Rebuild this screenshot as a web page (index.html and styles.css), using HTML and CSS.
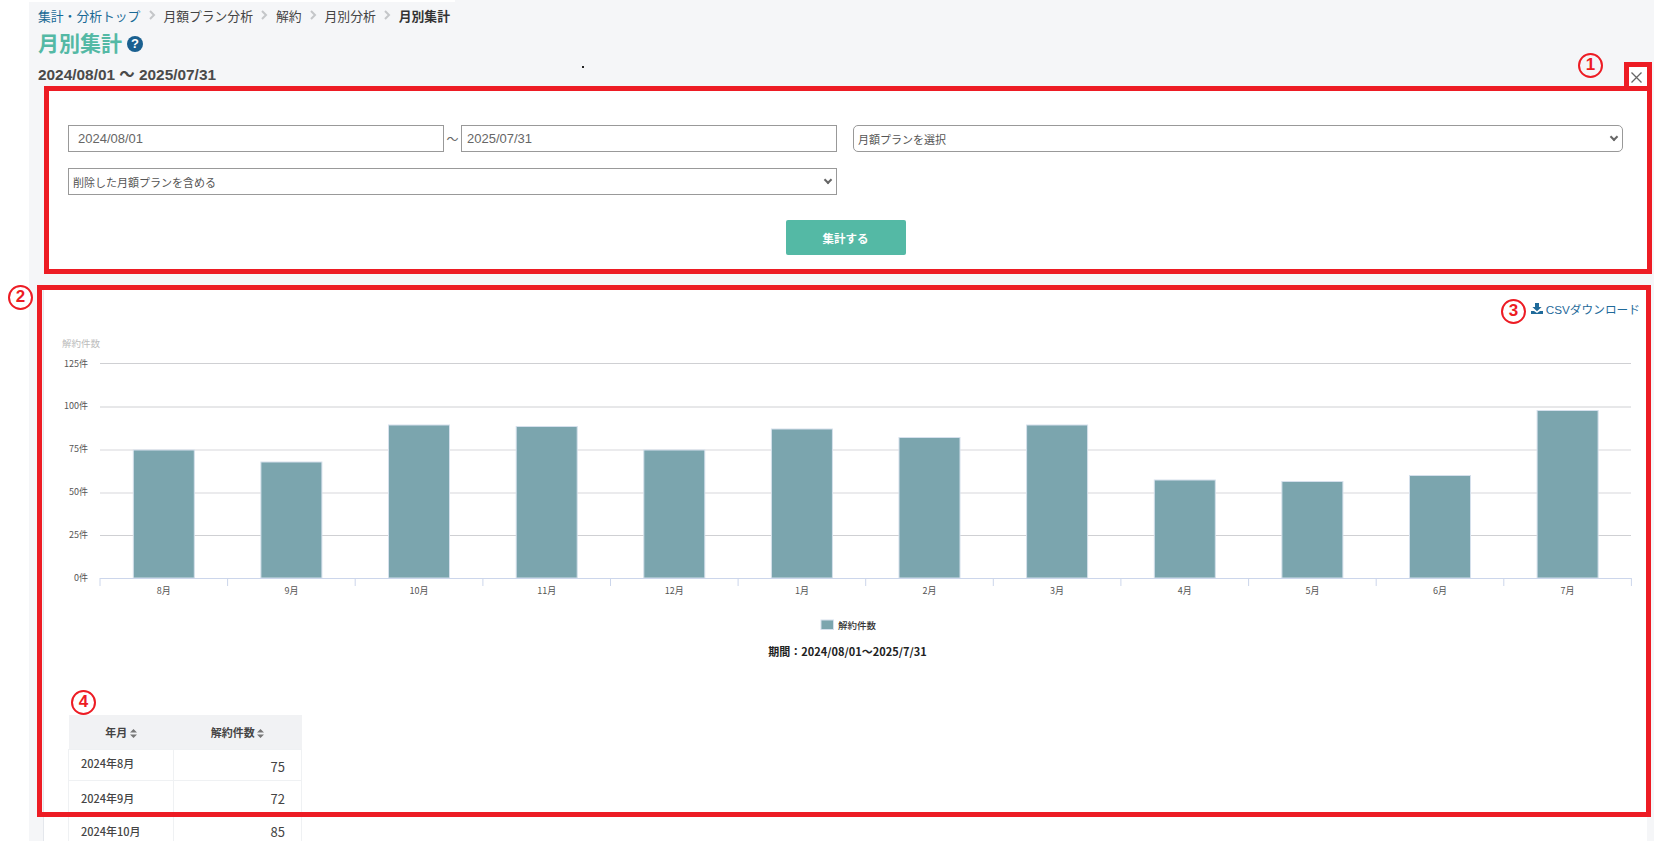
FILE: index.html
```html
<!DOCTYPE html>
<html lang="ja">
<head>
<meta charset="UTF-8">
<meta name="viewport" content="width=device-width, initial-scale=1.0">
<title>月別集計</title>
<link rel="stylesheet" href="styles.css">
</head>
<body>

<div class="pane">
    <!-- Breadcrumb -->
    <nav class="crumbs">
        <a href="#">集計・分析トップ</a>
        <svg class="crumb-sep" width="8" height="10" viewBox="0 0 8 10"><path d="M2 1l4 4-4 4" fill="none" stroke="#c4c6c9" stroke-width="2"/></svg>
        <span>月額プラン分析</span>
        <svg class="crumb-sep" width="8" height="10" viewBox="0 0 8 10"><path d="M2 1l4 4-4 4" fill="none" stroke="#c4c6c9" stroke-width="2"/></svg>
        <span>解約</span>
        <svg class="crumb-sep" width="8" height="10" viewBox="0 0 8 10"><path d="M2 1l4 4-4 4" fill="none" stroke="#c4c6c9" stroke-width="2"/></svg>
        <span>月別分析</span>
        <svg class="crumb-sep" width="8" height="10" viewBox="0 0 8 10"><path d="M2 1l4 4-4 4" fill="none" stroke="#c4c6c9" stroke-width="2"/></svg>
        <strong>月別集計</strong>
    </nav>

    <div class="title-row">
        <h1>月別集計</h1>
        <span class="help">?</span>
    </div>
    <div class="period">2024/08/01 ～ 2025/07/31</div>

    <!-- Search form -->
    <form class="search-panel">
        <div class="search-grid">
            <div class="date-range">
                <input type="text" value="2024/08/01">
                <span class="tilde">～</span>
                <input type="text" value="2025/07/31" class="date-to">
            </div>
            <div class="select-wrap"><select class="plan-select"><option>月額プランを選択</option></select></div>
            <div class="select-wrap"><select><option>削除した月額プランを含める</option></select></div>
        </div>
        <div class="submit-row">
            <button type="button">集計する</button>
        </div>
    </form>

    <!-- Result -->
    <section class="result-panel">
        <div class="csv-row">
            <a href="#" class="csv-link">
                <svg width="12" height="11" viewBox="0 0 12 11"><path d="M4 0h4v4h2.6L6 8.2 1.4 4H4zM0 8h3l3 2 3-2h3v3H0z" fill="#1f6a9a"/></svg>
                CSVダウンロード
            </a>
        </div>

        <svg class="chart" width="1603" height="340" viewBox="44 330 1603 340">
            <text class="axis-title" x="62" y="347">解約件数</text>

            <g class="grid">
                <line x1="100" x2="1631" y1="363.5" y2="363.5"/>
                <line x1="100" x2="1631" y1="407" y2="407"/>
                <line class="soft" x1="100" x2="1631" y1="450" y2="450"/>
                <line class="soft" x1="100" x2="1631" y1="493" y2="493"/>
                <line x1="100" x2="1631" y1="535.5" y2="535.5"/>
            </g>

            <g class="y-labels">
                <text x="88" y="367">125件</text>
                <text x="88" y="409">100件</text>
                <text x="88" y="452">75件</text>
                <text x="88" y="495">50件</text>
                <text x="88" y="538">25件</text>
                <text x="88" y="581">0件</text>
            </g>

            <g class="bars">
                <rect x="133.3" y="450" width="61" height="128"/>
                <rect x="260.9" y="462" width="61" height="116"/>
                <rect x="388.5" y="425" width="61" height="153"/>
                <rect x="516.2" y="426.5" width="61" height="151.5"/>
                <rect x="643.8" y="450" width="61" height="128"/>
                <rect x="771.4" y="429" width="61" height="149"/>
                <rect x="899" y="437.5" width="61" height="140.5"/>
                <rect x="1026.6" y="425" width="61" height="153"/>
                <rect x="1154.3" y="480" width="61" height="98"/>
                <rect x="1281.9" y="481.5" width="61" height="96.5"/>
                <rect x="1409.5" y="475.5" width="61" height="102.5"/>
                <rect x="1537.1" y="410.5" width="61" height="167.5"/>
            </g>

            <g class="axis">
                <path d="M100 578.5H1631"/>
                <path d="M100 578v8M227.6 578v8M355.2 578v8M482.9 578v8M610.5 578v8M738.1 578v8M865.7 578v8M993.3 578v8M1120.9 578v8M1248.6 578v8M1376.2 578v8M1503.8 578v8M1631.4 578v8"/>
            </g>

            <g class="x-labels">
                <text x="163.8" y="594">8月</text>
                <text x="291.4" y="594">9月</text>
                <text x="419" y="594">10月</text>
                <text x="546.7" y="594">11月</text>
                <text x="674.3" y="594">12月</text>
                <text x="801.9" y="594">1月</text>
                <text x="929.5" y="594">2月</text>
                <text x="1057.1" y="594">3月</text>
                <text x="1184.8" y="594">4月</text>
                <text x="1312.4" y="594">5月</text>
                <text x="1440" y="594">6月</text>
                <text x="1567.6" y="594">7月</text>
            </g>

            <rect class="legend-box" x="821" y="620" width="12.5" height="9.5"/>
            <text class="legend-text" x="838" y="628.5">解約件数</text>
            <text class="chart-caption" x="847.5" y="655.5">期間：2024/08/01～2025/7/31</text>
        </svg>

        <table class="summary">
            <thead>
                <tr>
                    <th class="col-month">年月 <svg class="sort" width="7" height="9" viewBox="0 0 7 9"><path d="M3.5 0L7 3.6H0zM0 5.4h7L3.5 9z"/></svg></th>
                    <th class="col-count">解約件数 <svg class="sort" width="7" height="9" viewBox="0 0 7 9"><path d="M3.5 0L7 3.6H0zM0 5.4h7L3.5 9z"/></svg></th>
                </tr>
            </thead>
            <tbody>
                <tr><td class="month">2024年8月</td><td class="count">75</td></tr>
                <tr><td class="month">2024年9月</td><td class="count">72</td></tr>
                <tr><td class="month">2024年10月</td><td class="count">85</td></tr>
            </tbody>
        </table>
    </section>
</div>

<!-- Close tab on the search panel -->
<div class="close-tab">
    <svg width="11" height="11" viewBox="0 0 11 11"><path d="M.5.5l10 10M10.5.5l-10 10" stroke="#666" stroke-width="1.3"/></svg>
</div>

<span class="speck"></span>

<!-- Red annotations drawn over the screenshot -->
<div class="mark mark-close"></div>
<div class="mark mark-search"></div>
<div class="mark mark-result"></div>
<span class="num num-1">1</span>
<span class="num num-2">2</span>
<span class="num num-3">3</span>
<span class="num num-4">4</span>

</body>
</html>
```

FILE: styles.css
```css
html, body {
    height: 100%;
}

body {
    margin: 0;
    height: 841px;
    overflow: hidden;
    position: relative;
    background-color: #ffffff;
    color: #444;
    font-family: "Liberation Sans", "Noto Sans CJK JP", sans-serif;
}

.pane {
    margin-left: 29px;
    height: 841px;
    overflow: hidden;
    background-color: #f5f6f8;
}

/* Breadcrumb */
.crumbs {
    display: flex;
    align-items: center;
    width: 426px;
    box-sizing: border-box;
    height: 28px;
    padding-left: 9px;
    border-top: 2px solid #ffffff;
    font-size: 12.8px;
    color: #444;
}

.crumbs a {
    color: #1a6a96;
    text-decoration: none;
}

.crumbs strong {
    color: #333;
}

.crumb-sep {
    margin: 0 7.5px;
}

/* Heading */
.title-row {
    display: flex;
    align-items: center;
    height: 32px;
    padding-left: 9px;
}

h1 {
    margin: 0;
    font-size: 21px;
    line-height: 32px;
    font-weight: bold;
    color: #54b9a5;
}

.help {
    width: 16px;
    height: 16px;
    margin-left: 5px;
    border-radius: 50%;
    background-color: #1a6090;
    color: #ffffff;
    font-size: 13px;
    font-weight: bold;
    line-height: 16px;
    text-align: center;
}

.period {
    height: 30px;
    padding-left: 9px;
    font-size: 15.4px;
    font-weight: bold;
    line-height: 30px;
    color: #4a4a4a;
}

/* Search form */
.search-panel {
    margin: 0 7px 0 15px;
    padding: 35px 24px 18px;
    background-color: #ffffff;
}

.search-grid {
    display: grid;
    grid-template-columns: 769px 770px;
    column-gap: 16px;
    row-gap: 16px;
}

.date-range {
    display: flex;
    align-items: center;
}

.date-range input {
    width: 376px;
    box-sizing: border-box;
    height: 27px;
    padding: 0 9px;
    border: 1px solid #999;
    border-radius: 0;
    background: #ffffff;
    color: #666;
    font-family: "Liberation Sans", sans-serif;
    font-size: 13px;
}

.date-range .date-to {
    padding-left: 5px;
}

.tilde {
    width: 17px;
    text-align: center;
    font-size: 12px;
    color: #666;
}

.select-wrap {
    position: relative;
}

/* chevron for the select, the native one is too heavy */
.select-wrap::after {
    content: '';
    position: absolute;
    right: 6px;
    top: 9px;
    width: 4px;
    height: 4px;
    border-right: 2px solid #666;
    border-bottom: 2px solid #666;
    transform: rotate(45deg);
    pointer-events: none;
}

select {
    appearance: none;
    display: block;
    box-sizing: border-box;
    height: 27px;
    width: 100%;
    padding: 0 0 0 4px;
    border: 1px solid #999;
    border-radius: 0;
    background-color: #ffffff;
    color: #555;
    font-family: "Noto Sans CJK JP", sans-serif;
    font-size: 11px;
}

.plan-select {
    border-radius: 5px;
}

.submit-row {
    margin-top: 25px;
    text-align: center;
}

button {
    width: 120px;
    height: 35px;
    border: none;
    border-radius: 2px;
    background-color: #54b9a5;
    color: #ffffff;
    font-family: "Noto Sans CJK JP", sans-serif;
    font-size: 11.5px;
    font-weight: bold;
}

/* Result */
.result-panel {
    margin: 16px 7px 0 14px;
    height: 553px;
    border-left: 1px solid #e4e7ec;
    background-color: #ffffff;
}

.csv-row {
    height: 41px;
    padding-right: 7px;
    box-sizing: border-box;
    padding-top: 11px;
    text-align: right;
}

.csv-link {
    display: inline-flex;
    align-items: center;
    gap: 3px;
    color: #1f6a9a;
    text-decoration: none;
    font-size: 11.7px;
}

.chart {
    display: block;
    font-family: "Noto Sans CJK JP", sans-serif;
}

.axis-title {
    font-size: 9.5px;
    fill: #bbbbbb;
}

.grid line {
    stroke: #cfd0d3;
    stroke-width: 1;
}

.grid .soft {
    stroke: #e4e5e7;
    stroke-width: 1.5;
}

.y-labels text {
    font-size: 9px;
    fill: #555;
    text-anchor: end;
}

.x-labels text {
    font-size: 9px;
    fill: #555;
    text-anchor: middle;
}

.bars rect, .legend-box {
    fill: #7ba5ae;
    stroke: #d5e0ec;
    stroke-width: 1;
}

.axis path {
    fill: none;
    stroke: #ccd6eb;
    stroke-width: 1;
}

.legend-text {
    font-size: 9.5px;
    font-weight: 500;
    fill: #333;
}

.chart-caption {
    font-size: 11px;
    font-weight: bold;
    fill: #222;
    text-anchor: middle;
}

.summary {
    margin: 45px 0 0 24px;
    border-collapse: collapse;
    font-family: "Noto Sans CJK JP", sans-serif;
}

.summary th {
    height: 34px;
    padding: 0;
    background-color: #f1f2f4;
    font-size: 11px;
    font-weight: bold;
    color: #444;
}

.sort {
    fill: #777;
    vertical-align: -1px;
}

.col-month {
    width: 105px;
}

.col-count {
    width: 128px;
}

.summary td {
    height: 33px;
    box-sizing: border-box;
    padding: 0;
    border: 1px solid #eff1f3;
    line-height: 16px;
}

.summary tbody tr:first-child td {
    height: 31px;
}

.summary .month {
    padding: 2px 0 0 12px;
    font-size: 11px;
    font-weight: 500;
    color: #444;
}

.summary tbody tr:first-child .month {
    padding: 0 0 5px 12px;
}

.summary .count {
    padding: 3px 16px 0 0;
    text-align: right;
    font-size: 13px;
    color: #444;
}

/* Overlays */
.close-tab {
    position: absolute;
    left: 1629px;
    top: 67px;
    width: 17px;
    height: 20px;
    padding-left: 2px;
    display: flex;
    align-items: center;
    background-color: #ffffff;
}

.speck {
    position: absolute;
    left: 582px;
    top: 66px;
    width: 2px;
    height: 2px;
    background-color: #222;
}

.mark {
    position: absolute;
    box-sizing: border-box;
    border: 5px solid #ed1c24;
}

.mark-close {
    left: 1624px;
    top: 62px;
    width: 28px;
    height: 29px;
}

.mark-search {
    left: 44px;
    top: 86px;
    width: 1608px;
    height: 188px;
}

.mark-result {
    left: 37px;
    top: 285px;
    width: 1614px;
    height: 532px;
}

.num {
    position: absolute;
    box-sizing: border-box;
    width: 25px;
    height: 25px;
    border: 2.5px solid #ed1c24;
    border-radius: 50%;
    background-color: #ffffff;
    color: #ed1c24;
    font-size: 17px;
    font-weight: bold;
    line-height: 20px;
    text-align: center;
}

.num-1 {
    left: 1578px;
    top: 53px;
    background-color: transparent;
}

.num-2 {
    left: 8px;
    top: 285px;
}

.num-3 {
    left: 1501px;
    top: 299px;
}

.num-4 {
    left: 71px;
    top: 690px;
}
```
